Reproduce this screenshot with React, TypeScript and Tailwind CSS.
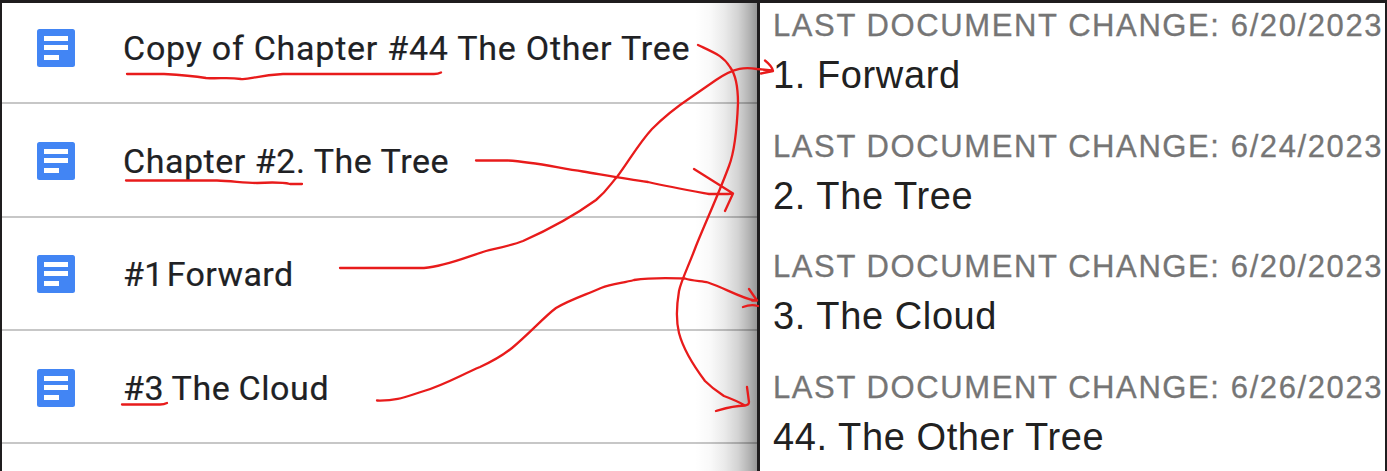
const documents = [
  { title: 'Copy of Chapter #44 The Other Tree', spacing: 'tracking-[0.76px]', height: 'h-[101px]', pad: 'pt-[26px]' },
  { title: 'Chapter #2. The Tree', spacing: 'tracking-[0.53px]', height: 'h-[114px]', pad: 'pt-[38px]' },
  { title: '#1 Forward', spacing: 'tracking-[0.4px] [word-spacing:-6px]', height: 'h-[113px]', pad: 'pt-[37px]' },
  { title: '#3 The Cloud', spacing: 'tracking-[0.6px] [word-spacing:-1px]', height: 'h-[113px]', pad: 'pt-[38px]' },
];

const changes = [
  { date: '6/20/2023', title: '1. Forward' },
  { date: '6/24/2023', title: '2. The Tree' },
  { date: '6/20/2023', title: '3. The Cloud' },
  { date: '6/26/2023', title: '44. The Other Tree' },
];

function DocIcon() {
  return (
    <svg className="h-[38px] w-[38px] shrink-0" viewBox="0 0 38 38">
      <rect width="38" height="38" rx="2.5" fill="#4285f4" />
      <path d="M7 7h24v5H7zM7 16h24v5H7zM7 26h15v5H7z" fill="#fff" />
    </svg>
  );
}

function Annotations() {
  return (
    <svg
      className="pointer-events-none absolute inset-0 h-[471px] w-[1387px]"
      viewBox="0 0 1387 471"
      fill="none"
      stroke="#e81b1b"
      strokeWidth="2.3"
      strokeLinecap="round"
      strokeLinejoin="round"
    >
      <path d="M127 74H164C181 75 193 76 206 78C219 79 227 77 241 79C250 80 257 75 283 74H434Q438 74 441 72.5" />
      <path d="M126 180.500H217C232 181 245 183 257 183C275 182 284 182.500 290 184H302" />
      <path d="M122 404.500H160Q164 404.500 167 403" />
      <path d="M698 45C717 54 723 56 730 67C736 75 738 89 738 103C737 128 734 153 729 166C719 193 707 219 696 246C689 265 681 281 679 291C676 309 676 321 679 333C684 352 696 369 705 381C713 389 718 392 724 396C732 399 739 402 745 405.500M747 387L749 402Q749 405 745 405.500C731 406 723 409 716 411" />
      <path d="M476 160.500H508C535 162 558 168 583 171.500C604 175 625 179 648 182C670 187 687 190 709 194H728L733 193.500M694 169L733 193.500L725 211" />
      <path d="M340 268H424C447 266 466 257 486 251C503 247 513 245 523 241C550 229 571 218 596 200C609 189 611 183 617 177C629 161 639 143 652 129C664 117 675 108 690 98L716 80C735 67 746 67 757 69L772 70.500M765 60.500Q772 66 773 71L761 73.500" />
      <path d="M377 400.500C400 401 407 396 424 391C444 385 461 375 480 367C491 362 502 356 512 348C530 333 545 316 556 308C569 300 585 295 601 288C612 284 623 283 634 280C654 277 669 278 685 278.500C692 281 702 281 708 282.500C725 288 740 298 755 300.500M749 289L757 300.500H752M743 307Q751 304 758 306" />
    </svg>
  );
}

export default function App() {
  return (
    <main className="relative flex h-[471px] w-[1387px] overflow-hidden border-t-[3px] border-r-2 border-l-2 border-[#1f1d1e] bg-white">
      <section className="w-[755px] shrink-0 bg-[linear-gradient(to_right,transparent_693px,#00000006_708px,#00000014_722px,#0000002c_736px,#00000048_746px,#00000068_755px)]">
        {documents.map((doc) => (
          <div
            key={doc.title}
            className={`flex items-start gap-[48px] border-b-2 border-[#00000038] pl-[35px] ${doc.height} ${doc.pad}`}
          >
            <DocIcon />
            <span
              className={`font-['Roboto',sans-serif] text-[34px] leading-[38px] font-normal whitespace-nowrap text-[#202124] [-webkit-text-stroke:0.2px_#202124] ${doc.spacing}`}
            >
              {doc.title}
            </span>
          </div>
        ))}
      </section>
      <section className="flex grow flex-col border-l-[3px] border-[#1f1d1e] pl-[13px] font-['Liberation_Sans',sans-serif] whitespace-nowrap">
        {changes.map((item) => (
          <article key={item.title} className="h-[120.5px] shrink-0 pt-[5px]">
            <p className="text-[31px] leading-[36px] tracking-[1.6px] text-[#757575] [-webkit-text-stroke:0.3px_#757575]">
              LAST DOCUMENT CHANGE: {item.date}
            </p>
            <h2 className="pt-[9px] text-[38px] leading-[44px] tracking-[0.6px] text-[#212121]">{item.title}</h2>
          </article>
        ))}
      </section>
      <div className="absolute inset-x-[-2px] top-[-3px] h-[471px]">
        <Annotations />
      </div>
    </main>
  );
}
